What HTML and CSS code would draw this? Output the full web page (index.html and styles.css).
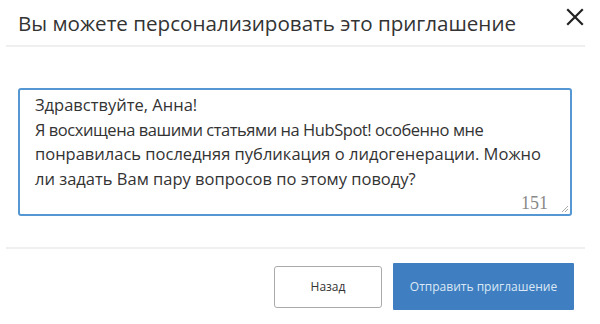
FILE: index.html
```html
<!DOCTYPE html>
<html lang="ru">
<head>
<meta charset="utf-8">
<link rel="stylesheet" href="styles.css">
</head>
<body>
<div class="modal">
  <div class="header">
    <h1 class="title">Вы можете персонализировать это приглашение</h1>
    <button class="close" aria-label="Закрыть">
      <svg width="18" height="18" viewBox="0 0 18 18"><path d="M2 2 L16 16 M16 2 L2 16" stroke="#222" stroke-width="2.2" stroke-linecap="square" fill="none"/></svg>
    </button>
  </div>
  <div class="body">
    <div class="note">
      <div class="note-text">Здравствуйте, Анна!<br><span class="tight">Я восхищена вашими статьями на HubSpot! особенно мне</span><br>понравилась последняя публикация о лидогенерации. Можно<br>ли задать Вам пару вопросов по этому поводу?</div>
      <div class="note-foot">
        <span class="counter">151</span>
        <svg class="grip" width="8" height="8" viewBox="0 0 8 8"><path d="M7 1 L1 7 M7 4 L4 7" stroke="#aaa" stroke-width="1" fill="none"/></svg>
      </div>
    </div>
  </div>
  <div class="footer">
    <button class="btn btn-back">Назад</button>
    <button class="btn btn-send">Отправить приглашение</button>
  </div>
</div>
</body>
</html>
```
FILE: styles.css
```css
* { box-sizing: border-box; }
html, body { margin: 0; padding: 0; background: #fff; }
body {
  width: 600px;
  height: 324px;
  font-family: "Open Sans", "Noto Sans", sans-serif;
  color: #333;
  overflow: hidden;
}
.modal { width: 600px; }
.header {
  display: flex;
  align-items: center;
  justify-content: space-between;
  height: 47px;
  margin: 0 15px 0 6px;
  padding: 0 0 0 12px;
  border-bottom: 2px solid #efefef;
}
.title {
  margin: 0;
  font-size: 20.6px;
  font-weight: 400;
  color: #333;
  letter-spacing: 0;
}
.close {
  border: 0;
  background: none;
  padding: 0;
  margin: 0 1px 12px 0;
  width: 18px;
  height: 18px;
  display: flex;
}
.body {
  padding: 41px 28px 31px 18px;
}
.note {
  border: 2px solid #5597d3;
  border-radius: 3px;
  height: 128px;
  padding: 3px 0 0 15px;
  display: flex;
  flex-direction: column;
  justify-content: space-between;
}
.note-text {
  font-size: 16.5px;
  line-height: 24.5px;
  color: #333;
}
.tight { letter-spacing: -0.45px; }
.note-foot {
  display: flex;
  justify-content: flex-end;
  align-items: flex-end;
  gap: 13px;
  padding: 0 1px 1px 0;
}
.counter {
  font-family: "Liberation Serif", serif;
  font-size: 18px;
  color: #888;
  line-height: 19px;
}
.grip { display: block; }
.footer {
  display: flex;
  justify-content: flex-end;
  align-items: center;
  gap: 11px;
  margin: 0 15px 0 6px;
  padding: 14px 11px 0 0;
  border-top: 2px solid #efefef;
}
.btn {
  font-family: "Open Sans", "Noto Sans", sans-serif;
  font-size: 12px;
  cursor: pointer;
}
.btn-back {
  width: 108px;
  height: 42px;
  background: #fff;
  border: 1.5px solid #aaa;
  border-radius: 3px;
  color: #333;
}
.btn-send {
  width: 181px;
  height: 47px;
  background: #3f7fc1;
  border: 0;
  border-radius: 1px;
  color: #dce8f6;
}
```
